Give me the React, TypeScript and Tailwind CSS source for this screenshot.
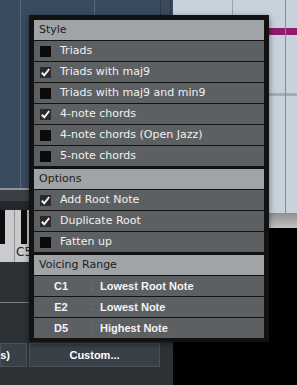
import React from 'react'

const styleItems = [
    { label: 'Triads', checked: false },
    { label: 'Triads with maj9', checked: true },
    { label: 'Triads with maj9 and min9', checked: false },
    { label: '4-note chords', checked: true },
    { label: '4-note chords (Open Jazz)', checked: false },
    { label: '5-note chords', checked: false },
]

const optionItems = [
    { label: 'Add Root Note', checked: true },
    { label: 'Duplicate Root', checked: true },
    { label: 'Fatten up', checked: false },
]

const voicing = [
    { note: 'C1', label: 'Lowest Root Note' },
    { note: 'E2', label: 'Lowest Note' },
    { note: 'D5', label: 'Highest Note' },
]

const Checkbox: React.FC<{ checked: boolean }> = ({ checked }) => (
    <div className={`w-[11px] h-[11px] flex items-center justify-center ${checked ? 'bg-[#2a2a2a]' : 'bg-[#0a0a0a]'}`}>
        {checked && (
            <svg width="11" height="11" viewBox="0 0 11 11">
                <path d="M1.8 5.8 L4.3 8.3 L9.2 2" fill="none" stroke="#f4f4f4" strokeWidth="2" />
            </svg>
        )}
    </div>
)

const Header: React.FC<{ title: string }> = ({ title }) => (
    <div className="h-[20px] bg-[#a1a4a7] text-[#1c1c1c] flex items-center pl-[5px] font-['DejaVu_Sans',sans-serif] text-[11px]">
        {title}
    </div>
)

const CheckRow: React.FC<{ label: string; checked: boolean }> = ({ label, checked }) => (
    <div className="h-[20px] bg-[#5d6063] flex items-center pl-[6px] gap-[9px] text-[#f0f0f0] font-['DejaVu_Sans',sans-serif] text-[11px]">
        <Checkbox checked={checked} />
        <span>{label}</span>
    </div>
)

const VoicingRow: React.FC<{ note: string; label: string }> = ({ note, label }) => (
    <div className="h-[20px] bg-[#5d6063] flex items-center text-[#f4f4f4] font-['Liberation_Sans',sans-serif] font-bold text-[11px]">
        <span className="w-[54px] text-center">{note}</span>
        <svg width="5" height="12" viewBox="0 0 5 12" className="ml-[1px]">
            <path d="M0.5 4 L2.5 1.5 L4.5 4 Z" fill="#666a6d" />
            <path d="M0.5 8 L2.5 10.5 L4.5 8 Z" fill="#666a6d" />
        </svg>
        <span className="ml-[6px]">{label}</span>
    </div>
)

const ChordPopup = () => (
    <div className="absolute left-[29px] top-[15px] w-[240px] bg-[#121212] px-[5px] pt-[5px] pb-[4px] shadow-[0_2px_6px_rgba(0,0,0,0.5)]">
        <div className="flex flex-col gap-[3px]">
            <div className="flex flex-col gap-px">
                <Header title="Style" />
                {styleItems.map((item) => (
                    <CheckRow key={item.label} label={item.label} checked={item.checked} />
                ))}
            </div>
            <div className="flex flex-col gap-px">
                <Header title="Options" />
                {optionItems.map((item) => (
                    <CheckRow key={item.label} label={item.label} checked={item.checked} />
                ))}
            </div>
            <div className="flex flex-col gap-px">
                <Header title="Voicing Range" />
                {voicing.map((v) => (
                    <VoicingRow key={v.note} note={v.note} label={v.label} />
                ))}
            </div>
        </div>
    </div>
)

// piano strip under the left panel
const Piano = () => (
    <div className="h-[52px] flex bg-[#c9cbcd]">
        <div className="w-[5px] h-[34px] bg-[#0c0c0c]" />
        <div className="w-[9px]" />
        <div className="w-px bg-[#8d9094]" />
        <div className="w-[6px]" />
        <div className="w-[6px] h-[34px] bg-[#0c0c0c]" />
        <div className="flex-1 relative">
            <span className="absolute left-[-11px] bottom-[1px] text-[12px] text-[#222] font-['DejaVu_Sans',sans-serif]">C5</span>
        </div>
    </div>
)

const Background = () => (
    <div className="flex h-full">
        <div className="w-[173px] flex flex-col">
            <div className="h-[188px] flex bg-[#3b4b5e]">
                <div className="w-[20px]" />
                <div className="w-px bg-[#566779]" />
                <div className="w-[73px]" />
                <div className="w-px bg-[#566779]" />
                <div className="w-[65px]" />
                <div className="w-px bg-[#2d3a48]" />
                <div className="w-[9px]" />
                <div className="w-px bg-[#2d3a48]" />
            </div>
            <div className="h-[2px] bg-[#8c9298]" />
            <div className="h-[11px] bg-[#3b4046]" />
            <div className="h-[9px] bg-[#24282c]" />
            <Piano />
            <div className="h-[40px] bg-[#2d3237]" />
            <div className="h-px bg-[#7e8286]" />
            <div className="h-[40px] bg-[#2d3237]" />
            <div className="h-[24px] flex gap-[2px] bg-[#2d3237]">
                <div className="w-[27px] bg-[#394048] border border-[#4a5159] flex items-center justify-end pr-[16px] text-white font-['Liberation_Sans',sans-serif] font-bold text-[11px]">
                    s)
                </div>
                <div className="w-[131px] bg-[#394048] border border-[#4a5159] flex items-center justify-center text-white font-['Liberation_Sans',sans-serif] font-bold text-[11px]">
                    Custom...
                </div>
            </div>
            <div className="flex-1 bg-[#2d3237]" />
        </div>
        <div className="flex-1 flex flex-col">
            <div className="h-[213px] flex bg-[#c8d2dc]">
                <div className="w-[59px] flex flex-col">
                    <div className="h-[28px]" />
                    <div className="h-[7px] bg-[#8b1d6f]" />
                    <div className="h-[58px]" />
                    <div className="h-[3px] bg-[#a7abaf]" />
                </div>
                <div className="w-px bg-[#9aa6b2]" />
                <div className="w-[52px] flex flex-col">
                    <div className="h-[28px]" />
                    <div className="h-[7px] bg-[#8b1d6f]" />
                    <div className="h-[58px]" />
                    <div className="h-[3px] bg-[#a7abaf]" />
                </div>
                <div className="w-px bg-[#7f8c99]" />
                <div className="flex-1 flex flex-col">
                    <div className="h-[28px]" />
                    <div className="h-[7px] bg-[#8b1d6f]" />
                    <div className="h-[58px]" />
                    <div className="h-[3px] bg-[#a7abaf]" />
                </div>
            </div>
            <div className="h-[15px] bg-gradient-to-b from-[#8f8f8f] to-[#c2c2c2]" />
            <div className="flex-1 bg-black" />
        </div>
    </div>
)

export default function App() {
    return (
        <div className="relative w-[297px] h-[385px] overflow-hidden bg-black">
            <Background />
            <ChordPopup />
        </div>
    )
}
